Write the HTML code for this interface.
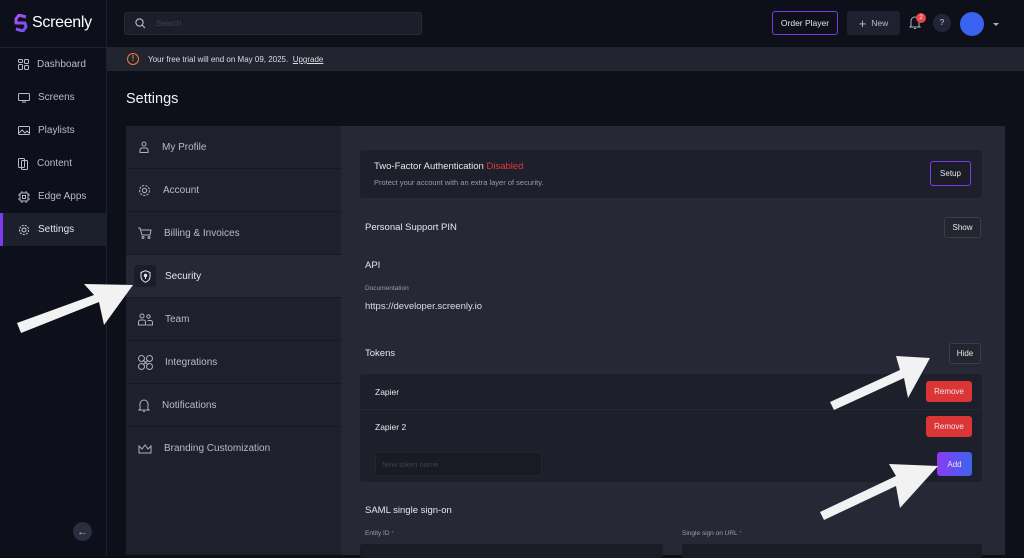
<!DOCTYPE html>
<html><head><meta charset="utf-8"><style>
*{box-sizing:border-box;margin:0;padding:0}
body{width:1024px;height:555px;overflow:hidden;background:#0e1019;font-family:"Liberation Sans",sans-serif;color:#e6e7ec;position:relative}
.abs{position:absolute}
.side{left:0;top:0;width:107px;height:555px;background:#0d101a;border-right:1px solid #1d2030}
.nav{position:absolute;left:0;width:106px;height:33px;display:flex;align-items:center;font-size:10px;color:#b9bcc8}
.nav svg{margin:0 8px 0 18px;flex:none}
.menu{left:126px;top:126px;width:215px;height:429px;background:#1e202b}
.mi{position:absolute;left:0;width:215px;height:43px;border-bottom:1px solid #171922;display:flex;align-items:center;font-size:10px;color:#b9bcc8}
.mi svg{margin:0 12px 0 12px;flex:none}
.content{left:341px;top:126px;width:664px;height:429px;background:#262835}
.btn{position:absolute;display:flex;align-items:center;justify-content:center;font-size:8px;border-radius:3px;color:#e6e7ec}
.t{position:absolute;white-space:nowrap}
</style></head><body>
<div class="abs side">
  <div class="t" style="left:14px;top:14px;display:flex;align-items:center;font-size:16px;color:#fff;letter-spacing:-0.3px">
    <svg width="14" height="18" viewBox="0 0 14 18"><defs><linearGradient id="g" x1="0" y1="0" x2="1" y2="1"><stop offset="0" stop-color="#a855f7"/><stop offset="1" stop-color="#6d4cf0"/></linearGradient></defs><path d="M12 3 L5 1 L2 5 L2 9 L11 9 L12 13 L9 17 L2 15" fill="none" stroke="url(#g)" stroke-width="3" stroke-linejoin="round"/></svg>
    <span style="margin-left:4px">Screenly</span></div>
  <div style="position:absolute;left:0;top:47px;width:106px;border-top:1px solid #1d2030"></div>
  <div class="nav" style="top:48px"><svg width="11" height="11" viewBox="0 0 11 11" fill="none" stroke="#b9bcc8"><rect x=".5" y=".5" width="4" height="3" rx="1"/><rect x="6.5" y=".5" width="4" height="4" rx="1"/><rect x=".5" y="5.5" width="4" height="5" rx="1"/><rect x="6.5" y="6.5" width="4" height="4" rx="1"/></svg>Dashboard</div>
  <div class="nav" style="top:81px"><svg width="12" height="11" viewBox="0 0 12 11" fill="none" stroke="#b9bcc8"><rect x=".5" y="1.5" width="11" height="7" rx="1"/><path d="M4 10h4"/></svg>Screens</div>
  <div class="nav" style="top:114px"><svg width="12" height="11" viewBox="0 0 12 11" fill="none" stroke="#b9bcc8"><rect x=".5" y="1.5" width="11" height="8" rx="1"/><path d="M1 8l3-3 3 3 2-2 2 2"/></svg>Playlists</div>
  <div class="nav" style="top:147px"><svg width="11" height="12" viewBox="0 0 11 12" fill="none" stroke="#b9bcc8"><rect x=".5" y=".5" width="6" height="9" rx="1"/><rect x="3.5" y="2.5" width="6" height="9" rx="1"/></svg>Content</div>
  <div class="nav" style="top:180px"><svg width="12" height="12" viewBox="0 0 12 12" fill="none" stroke="#b9bcc8"><rect x="2" y="2" width="8" height="8" rx="1"/><rect x="4.5" y="4.5" width="3" height="3"/><path d="M4 0v2M8 0v2M4 10v2M8 10v2M0 4h2M0 8h2M10 4h2M10 8h2"/></svg>Edge Apps</div>
  <div class="nav" style="top:213px;background:#1c1f2c;border-left:3px solid #7c3aed"><svg width="12" height="12" viewBox="0 0 12 12" fill="none" stroke="#d0d2dc" style="margin-left:15px"><circle cx="6" cy="6" r="2"/><circle cx="6" cy="6" r="4.6" stroke-dasharray="2 1.2"/></svg><span style="color:#e6e7ec">Settings</span></div>
  <div style="position:absolute;left:73px;top:522px;width:19px;height:19px;border-radius:50%;background:#2a2d3d;color:#aeb1bd;font-size:11px;display:flex;align-items:center;justify-content:center">←</div>
</div>
<div class="abs" style="left:124px;top:12px;width:298px;height:23px;background:#1c1e2a;border-radius:3px;border:1px solid #252836">
  <svg class="abs" style="left:10px;top:5px" width="11" height="11" viewBox="0 0 11 11" fill="none" stroke="#aeb1bd" stroke-width="1.2"><circle cx="4.5" cy="4.5" r="3.6"/><path d="M7.3 7.3L10 10"/></svg>
  <span class="t" style="left:31px;top:6px;font-size:8px;color:#3f4252">Search</span></div>
<div class="btn" style="left:772px;top:11px;width:66px;height:24px;border:1.5px solid #7c3aed;font-size:8.5px;background:#0e1019">Order Player</div>
<div class="btn" style="left:847px;top:11px;width:53px;height:24px;background:#1f2130;color:#b9bcc8;font-size:8.5px"><span style="font-size:13px;margin-right:5px">+</span>New</div>
<svg class="abs" style="left:909px;top:16px" width="12" height="14" viewBox="0 0 12 14" fill="none" stroke="#aeb1bd"><path d="M2 10V5a4 4 0 0 1 8 0v5l1 1H1zM5 12.5h2"/></svg>
<div class="abs" style="left:916px;top:13px;width:10px;height:10px;border-radius:50%;background:#ef4444;font-size:6.5px;color:#fff;text-align:center;line-height:10px">2</div>
<div class="abs" style="left:933px;top:14px;width:18px;height:18px;border-radius:50%;background:#22253a;color:#d0d2dc;font-size:8px;text-align:center;line-height:18px">?</div>
<div class="abs" style="left:960px;top:12px;width:24px;height:24px;border-radius:50%;background:#3a63f1"></div>
<div class="abs" style="left:993px;top:23px;border-left:3px solid transparent;border-right:3px solid transparent;border-top:3px solid #aeb1bd"></div>
<div class="abs" style="left:107px;top:47px;width:917px;height:24px;background:#222430">
  <div class="abs" style="left:20px;top:6px;width:12px;height:12px;border-radius:50%;border:1.5px solid #f07b3f;color:#f07b3f;font-size:8px;font-weight:bold;text-align:center;line-height:9px">!</div>
  <span class="t" style="left:41px;top:8px;font-size:8px;color:#dcdde3">Your free trial will end on May 09, 2025. &nbsp;<u>Upgrade</u></span></div>
<div class="t" style="left:126px;top:91px;font-size:14.5px;color:#f1f2f5">Settings</div>
<div class="abs menu">
  <div class="mi" style="top:0"><svg width="12" height="12" viewBox="0 0 12 12" fill="none" stroke="#aeb1bd"><circle cx="6" cy="3" r="2"/><path d="M2 11.5V9a2 2 0 0 1 2-2h4a2 2 0 0 1 2 2v2.5z"/></svg>My Profile</div>
  <div class="mi" style="top:43px"><svg width="13" height="13" viewBox="0 0 12 12" fill="none" stroke="#aeb1bd"><circle cx="6" cy="6" r="2"/><circle cx="6" cy="6" r="4.6" stroke-dasharray="2 1.2"/></svg>Account</div>
  <div class="mi" style="top:86px"><svg width="14" height="12" viewBox="0 0 14 12" fill="none" stroke="#aeb1bd"><path d="M0 1h2l2 7h8l1-5H3"/><circle cx="5" cy="10.5" r="1"/><circle cx="11" cy="10.5" r="1"/></svg>Billing &amp; Invoices</div>
  <div class="mi" style="top:129px;background:#262835"><div style="margin:0 9px 0 8px;width:22px;height:22px;background:#1b1d28;border-radius:3px;display:flex;align-items:center;justify-content:center;flex:none"><svg width="11" height="13" viewBox="0 0 11 13" fill="none" stroke="#e6e7ec" style="margin:0"><path d="M5.5 .7L10 2.5v4c0 3-2 4.8-4.5 5.8C3 11.3 1 9.5 1 6.5v-4z"/><circle cx="5.5" cy="5.5" r="1.2" fill="#e6e7ec"/><path d="M5.5 6.5v2.5"/></svg></div><span style="color:#e6e7ec">Security</span></div>
  <div class="mi" style="top:172px"><svg width="15" height="13" viewBox="0 0 15 13" fill="none" stroke="#aeb1bd"><circle cx="4" cy="3" r="2"/><circle cx="10.5" cy="3.5" r="1.7"/><path d="M.5 12V9a2 2 0 0 1 2-2h3a2 2 0 0 1 2 2v3zM8.5 12h6V9.5a2 2 0 0 0-2-2h-3"/></svg>Team</div>
  <div class="mi" style="top:215px"><svg width="15" height="15" viewBox="0 0 15 15" fill="none" stroke="#aeb1bd"><rect x=".5" y=".5" width="6" height="6" rx="3"/><rect x="8.5" y=".5" width="6" height="6" rx="3"/><rect x=".5" y="8.5" width="6" height="6" rx="3"/><rect x="8.5" y="8.5" width="6" height="6" rx="3"/><path d="M5 5l5 5M10 5l-5 5"/></svg>Integrations</div>
  <div class="mi" style="top:258px"><svg width="12" height="13" viewBox="0 0 12 13" fill="none" stroke="#aeb1bd"><path d="M2 10V5a4 4 0 0 1 8 0v5l1 1H1zM5 12.5h2"/></svg>Notifications</div>
  <div class="mi" style="top:301px;border:none"><svg width="14" height="11" viewBox="0 0 14 11" fill="none" stroke="#aeb1bd"><path d="M1 10V3l3 3 3-4 3 4 3-3v7z"/></svg>Branding Customization</div>
</div>
<div class="abs content">
  <div class="abs" style="left:19px;top:24px;width:622px;height:48px;background:#1d1f2a;border-radius:3px">
    <span class="t" style="left:14px;top:11px;font-size:9.5px;color:#e6e7ec">Two-Factor Authentication <span style="color:#e03b3b">Disabled</span></span>
    <span class="t" style="left:14px;top:28px;font-size:7.5px;color:#9a9daa">Protect your account with an extra layer of security.</span>
    <div class="btn" style="left:570px;top:11px;width:41px;height:25px;border:1.5px solid #7c3aed;background:#1a1c26">Setup</div>
  </div>
  <span class="t" style="left:24px;top:96px;font-size:9.5px">Personal Support PIN</span>
  <div class="btn" style="left:603px;top:91px;width:37px;height:21px;border:1px solid #3a3d4c;background:#23252f">Show</div>
  <span class="t" style="left:24px;top:134px;font-size:9.5px">API</span>
  <span class="t" style="left:24px;top:159px;font-size:6.5px;color:#9a9daa">Documentation</span>
  <span class="t" style="left:24px;top:175px;font-size:9.5px;color:#dcdde3">https://developer.screenly.io</span>
  <span class="t" style="left:24px;top:222px;font-size:9.5px">Tokens</span>
  <div class="btn" style="left:608px;top:217px;width:32px;height:21px;border:1px solid #3a3d4c;background:#23252f">Hide</div>
  <div class="abs" style="left:19px;top:248px;width:622px;height:108px;background:#1d1f2a;border-radius:3px">
    <div style="position:absolute;left:0;top:35px;width:622px;border-top:1px solid #262835"></div>
    <span class="t" style="left:15px;top:13px;font-size:8.5px">Zapier</span>
    <div class="btn" style="left:566px;top:7px;width:46px;height:21px;background:#dc3535">Remove</div>
    <span class="t" style="left:15px;top:48px;font-size:8.5px">Zapier 2</span>
    <div class="btn" style="left:566px;top:42px;width:46px;height:21px;background:#dc3535">Remove</div>
    <div class="abs" style="left:15px;top:78px;width:167px;height:24px;background:#181a24;border:1px solid #23252f;border-radius:3px"><span class="t" style="left:6px;top:7px;font-size:7.5px;color:#3f4252">New token name</span></div>
    <div class="btn" style="left:577px;top:78px;width:35px;height:24px;background:linear-gradient(90deg,#8b3cf0,#3b63f0)">Add</div>
  </div>
  <span class="t" style="left:24px;top:379px;font-size:9.5px">SAML single sign-on</span>
  <span class="t" style="left:24px;top:404px;font-size:6.5px;color:#9a9daa">Entity ID <span style="color:#e03b3b">*</span></span>
  <span class="t" style="left:341px;top:404px;font-size:6.5px;color:#9a9daa">Single sign on URL <span style="color:#e03b3b">*</span></span>
  <div class="abs" style="left:19px;top:418px;width:303px;height:14px;background:#1a1c26;border-radius:3px"></div>
  <div class="abs" style="left:341px;top:418px;width:300px;height:14px;background:#1a1c26;border-radius:3px"></div>
</div>
<svg class="abs" style="left:0;top:0" width="1024" height="555" viewBox="0 0 1024 555">
  <g fill="#f2f2f2">
    <polygon points="17,323 21,333 99,302 104,325 133,285 84,284 94,295"/>
    <polygon points="830,402 834,410 904,378 908,398 930,358 896,356 900,370"/>
    <polygon points="820,512 824,520 896,486 900,508 938,466 889,464 896,476"/>
  </g>
</svg>
</body></html>
